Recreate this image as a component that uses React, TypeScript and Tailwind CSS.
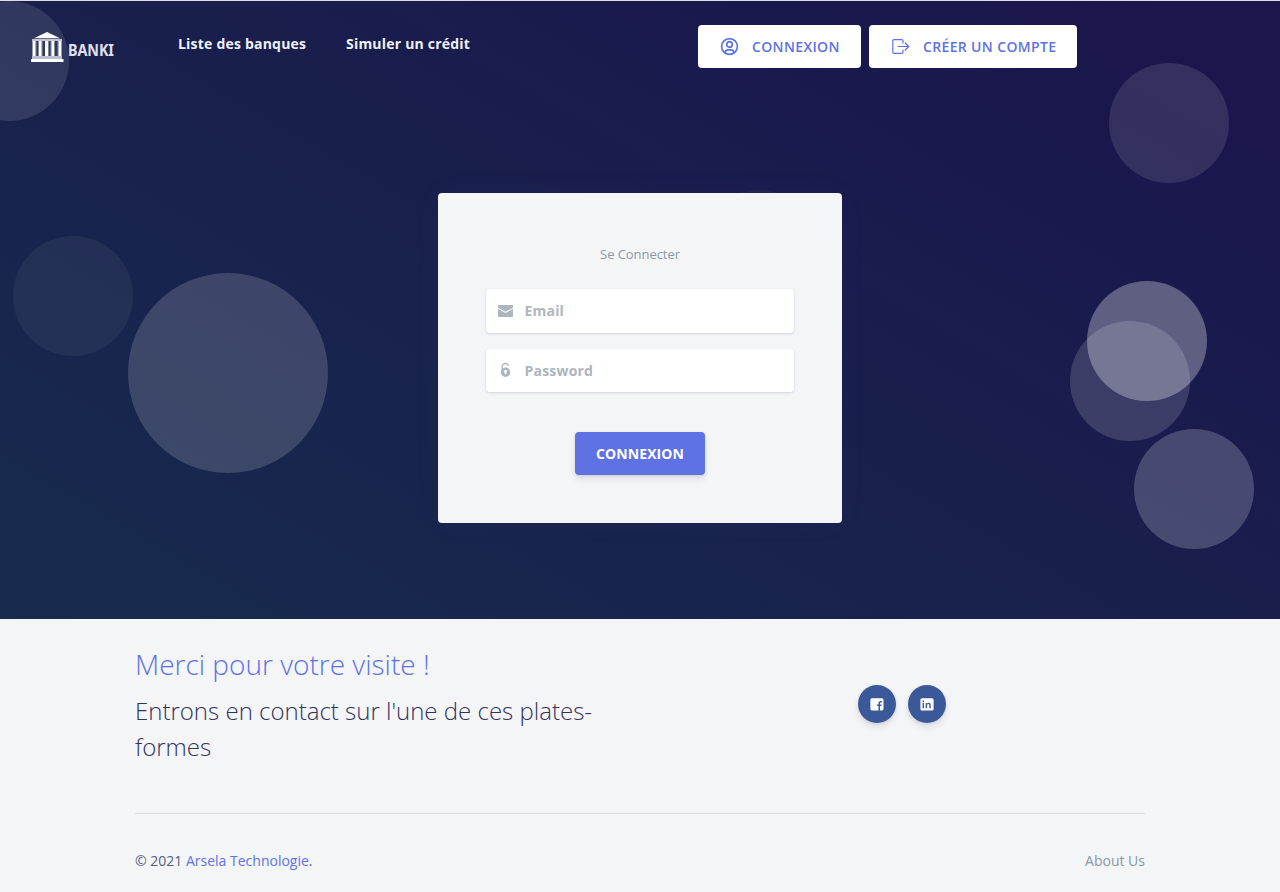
import type { ReactNode } from 'react';

const circles = [
  'left-[-51px] top-0 size-[120px] bg-white/11',
  'left-[128px] top-[272px] size-[200px] bg-white/16',
  'left-[13px] top-[235px] size-[120px] bg-white/5',
  'left-[699px] top-[189px] size-[120px] bg-white/4',
  'left-[1109px] top-[62px] size-[120px] bg-white/11',
  'left-[1070px] top-[320px] size-[120px] bg-white/15',
  'left-[1087px] top-[280px] size-[120px] bg-white/30',
  'left-[1134px] top-[428px] size-[120px] bg-white/20',
];

function Logo() {
  return (
    <a href="#" className="flex h-8 w-[86px] items-start">
      <svg width="33" height="32" viewBox="0 0 33 32" fill="#fff" className="shrink-0">
        <path d="M16 1 29 7.3H3Z" />
        <path d="M1 8h30v2H1z" fill="#c3c5d4" />
        <path d="M1.5 10h3v15h-3zM7.6 10h3v15h-3zM14 10h3v15h-3zM20.4 10h3v15h-3zM27.5 10h3v15h-3z" />
        <path d="M4.5 10h1v15h-1zM10.6 10h1v15h-1zM17 10h1v15h-1zM19.4 10h1v15h-1zM26.5 10h1v15h-1z" fillOpacity=".4" />
        <path d="M1 25h30v3H1z" fill="#bdbdd0" />
        <path d="M0 28h32.5v3H0z" />
      </svg>
      <span className="ml-[4px] mt-[7px] origin-left scale-x-[0.87] font-['Noto_Sans',sans-serif] text-[16.5px] leading-[24px] font-bold tracking-[-0.1px] whitespace-nowrap text-[#e0e0ec]">
        BANKI
      </span>
    </a>
  );
}

function UserIcon() {
  return (
    <svg width="19" height="19" viewBox="0 0 19 19" fill="none" stroke="currentColor" strokeWidth="1.7">
      <circle cx="9.5" cy="9.5" r="7.9" />
      <circle cx="9.5" cy="7.4" r="2.8" />
      <path d="M5.2 16c0-2.3 1.3-3.1 2.9-3.1h2.8c1.6 0 2.9.8 2.9 3.1" />
    </svg>
  );
}

function ExitIcon() {
  return (
    <svg width="19" height="19" viewBox="0 0 19 19" fill="none" stroke="currentColor" strokeWidth="1.2" strokeLinejoin="round" strokeLinecap="round">
      <path d="M12 6V3.8a1.2 1.2 0 0 0-1.2-1.2H3a1.2 1.2 0 0 0-1.2 1.2v11.4A1.2 1.2 0 0 0 3 16.4h7.8a1.2 1.2 0 0 0 1.2-1.2V13M7 9.5h10.5M14.2 6l3.5 3.5-3.5 3.5" />
    </svg>
  );
}

function HeaderButton({ icon, width, children }: { icon: ReactNode; width: string; children: ReactNode }) {
  return (
    <button className={`flex h-[43px] items-center rounded-[4px] bg-white pl-[22px] text-[14px] font-semibold text-[#5e72e4] ${width}`}>
      {icon}
      <span className="ml-[13px] whitespace-nowrap tracking-[0.35px]">{children}</span>
    </button>
  );
}

function Field({ icon, type, placeholder, height }: { icon: ReactNode; type: string; placeholder: string; height: string }) {
  return (
    <label className={`flex items-center rounded-[4px] bg-white pl-3 shadow-[0_1px_3px_rgba(50,50,93,0.15),0_1px_0_rgba(0,0,0,0.02)] ${height}`}>
      {icon}
      <input
        type={type}
        placeholder={placeholder}
        className="ml-[11.5px] w-full bg-transparent text-[14px] font-bold tracking-[0.2px] outline-none placeholder:text-[#adb5bd]"
      />
    </label>
  );
}

function Social({ children }: { children: ReactNode }) {
  return (
    <button className="flex size-[38px] items-center justify-center rounded-full bg-[#3b5999] text-white shadow-[0_4px_6px_rgba(50,50,93,0.11),0_1px_3px_rgba(0,0,0,0.08)]">
      {children}
    </button>
  );
}

export default function App() {
  return (
    <div className="min-h-[892px] bg-[#f4f5f7] font-['Open_Sans',sans-serif] text-[#525f7f]">
      <div className="h-px bg-[#dcdfe2]" />
      <section className="relative h-[618px] overflow-hidden bg-[linear-gradient(-150deg,#1b164c_0%,#1a174d_15%,#172b4d_100%)]">
        {circles.map((c) => (
          <span key={c} className={`absolute rounded-full ${c}`} />
        ))}
        <header className="relative flex h-[68px] items-start">
          <div className="ml-[31px] mt-[30px]">
            <Logo />
          </div>
          <nav className="ml-[61px] mt-[32px] flex gap-10 text-[14px] leading-[21px] font-bold tracking-[0.21px] text-[#f0f1f5]">
            <a href="#" className="w-32 whitespace-nowrap">Liste des banques</a>
            <a href="#" className="w-[124px] whitespace-nowrap">Simuler un crédit</a>
          </nav>
          <div className="ml-[228px] mt-6 flex gap-2">
            <HeaderButton icon={<UserIcon />} width="w-[163px]">CONNEXION</HeaderButton>
            <HeaderButton icon={<ExitIcon />} width="w-[208px]">CRÉER UN COMPTE</HeaderButton>
          </div>
        </header>
        <main className="relative mx-auto mt-[124px] flex h-[330px] w-[404px] flex-col rounded-[4px] bg-[#f4f5f7] px-12 pt-[51px] shadow-[0_0_32px_rgba(136,152,170,0.04)]">
          <h1 className="text-center text-[13px] leading-[21px] tracking-[-0.06px] text-[#8898aa]">Se Connecter</h1>
          <form className="mt-6 flex flex-col">
            <Field
              type="email"
              placeholder="Email"
              height="h-11 pb-px"
              icon={
                <svg width="15" height="12" viewBox="0 0 15 12" className="shrink-0">
                  <path d="M.5 0h14q.5 0 .5.5v2.2L7.5 6.8 0 2.7V.5Q0 0 .5 0ZM0 3.7l7.5 4.2L15 3.7v7.8q0 .5-.5.5H.5q-.5 0-.5-.5Z" fill="#adb5bd" />
                </svg>
              }
            />
            <div className="mt-4">
              <Field
                type="password"
                placeholder="Password"
                height="h-[43px]"
                icon={
                  <svg width="15" height="14" viewBox="0 0 15 14" className="mb-px shrink-0" fill="none">
                    <path d="M4.2 7V3.2a3.3 3.3 0 0 1 6.4-.4" stroke="#adb5bd" strokeWidth="1.3" />
                    <path fillRule="evenodd" d="M7.5 4.4a4.75 4.75 0 1 1 0 9.5 4.75 4.75 0 0 1 0-9.5Zm0 2.4a1.5 1.5 0 0 0-.7 2.8v1.7h1.4V9.6a1.5 1.5 0 0 0-.7-2.8Z" fill="#adb5bd" />
                  </svg>
                }
              />
            </div>
            <button type="button" className="mx-auto mt-10 h-[43px] w-[130px] rounded-[4px] bg-[#5e72e4] text-[14px] font-bold tracking-[0.12px] text-white shadow-[0_4px_6px_rgba(50,50,93,0.11),0_1px_3px_rgba(0,0,0,0.08)]">
              CONNEXION
            </button>
          </form>
        </main>
      </section>
      <footer className="mx-auto w-[1010px]">
        <div className="flex h-[194px]">
          <div className="w-[505px] pt-6 font-light">
            <h3 className="text-[28px] leading-[42px] text-[#5e72e4]">Merci pour votre visite !</h3>
            <h4 className="mt-2 text-[24px] leading-9 text-[#32325d]">Entrons en contact sur l'une de ces plates-formes</h4>
          </div>
          <div className="ml-[218px] flex gap-3 pt-[66px]">
            <Social>
              <svg width="14" height="13" viewBox="0 0 14 13">
                <path fillRule="evenodd" fill="currentColor" d="M1.9.3h10Q13.5.3 13.5 1.9v8.9q0 1.6-1.6 1.6H10V8h1.5V6.5H10v-1q0-1 1-1h.8V3h-1.3Q8.5 3 8.5 5.2v1.3H7.1V8h1.4v4.4H1.9Q.4 12.4.4 10.8V1.9Q.4.3 1.9.3Z" />
              </svg>
            </Social>
            <Social>
              <svg width="14" height="13" viewBox="0 0 14 13">
                <path fillRule="evenodd" fill="currentColor" d="M2 .2h10q1.6 0 1.6 1.6v9.1q0 1.6-1.6 1.6H2Q.4 12.5.4 10.9V1.8Q.4.2 2 .2ZM2.6 4.9v5.3H4V4.9ZM2.6 2.6V4H4V2.6ZM5.7 4.9v5.3h1.4V7.3Q7.2 6.1 8.2 6.1T9.3 7.3v2.9h1.4V7Q10.7 4.8 8.8 4.8 7.6 4.8 7 5.7V4.9Z" />
              </svg>
            </Social>
          </div>
        </div>
        <hr className="border-t border-[#d9dbdf]" />
        <div className="flex justify-between pt-[36px] text-[14px] leading-[21px]">
          <p>© 2021 <a href="#" className="text-[#5e72e4]">Arsela Technologie</a>.</p>
          <a href="#" className="text-[#8898aa]">About Us</a>
        </div>
      </footer>
    </div>
  );
}
